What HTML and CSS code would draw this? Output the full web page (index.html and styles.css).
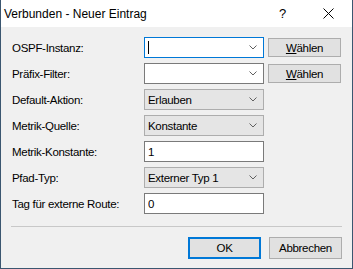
FILE: index.html
```html
<!DOCTYPE html>
<html lang="de">
<head>
    <meta charset="UTF-8">
    <meta name="viewport" content="width=device-width, initial-scale=1.0">
    <title>Verbunden - Neuer Eintrag</title>
    <link rel="stylesheet" href="styles.css">
</head>
<body>
    <div class="window">
        <!-- Titelleiste -->
        <div class="titlebar">
            <span class="title">Verbunden - Neuer Eintrag</span>
            <span class="help">?</span>
            <span class="close">
                <svg width="11" height="11" viewBox="0 0 11 11"><path d="M0.5 0.5 L10.5 10.5 M10.5 0.5 L0.5 10.5" stroke="#000" stroke-width="1" fill="none"/></svg>
            </span>
        </div>

        <div class="content">
            <div class="form">
                <label>OSPF-Instanz:</label>
                <div class="combo edit focus"><span class="caret"></span><svg class="chev" width="8" height="5" viewBox="0 0 8 5"><path d="M0.5 0.5 L4 4 L7.5 0.5" stroke="#606060" fill="none"/></svg></div>
                <button class="btn small"><u>W</u>ählen</button>

                <label>Präfix-Filter:</label>
                <div class="combo edit"><span></span><svg class="chev" width="8" height="5" viewBox="0 0 8 5"><path d="M0.5 0.5 L4 4 L7.5 0.5" stroke="#606060" fill="none"/></svg></div>
                <button class="btn small"><u>W</u>ählen</button>

                <label>Default-Aktion:</label>
                <div class="combo list"><span>Erlauben</span><svg class="chev" width="8" height="5" viewBox="0 0 8 5"><path d="M0.5 0.5 L4 4 L7.5 0.5" stroke="#606060" fill="none"/></svg></div>
                <div></div>

                <label>Metrik-Quelle:</label>
                <div class="combo list"><span>Konstante</span><svg class="chev" width="8" height="5" viewBox="0 0 8 5"><path d="M0.5 0.5 L4 4 L7.5 0.5" stroke="#606060" fill="none"/></svg></div>
                <div></div>

                <label>Metrik-Konstante:</label>
                <input class="field" type="text" value="1">
                <div></div>

                <label>Pfad-Typ:</label>
                <div class="combo list"><span>Externer Typ 1</span><svg class="chev" width="8" height="5" viewBox="0 0 8 5"><path d="M0.5 0.5 L4 4 L7.5 0.5" stroke="#606060" fill="none"/></svg></div>
                <div></div>

                <label>Tag für externe Route:</label>
                <input class="field" type="text" value="0">
                <div></div>
            </div>

            <div class="separator"></div>

            <div class="actions">
                <button class="btn default">OK</button>
                <button class="btn">Abbrechen</button>
            </div>
        </div>
    </div>
</body>
</html>
```

FILE: styles.css
```css
body {
    margin: 0;
    font-family: "Liberation Sans", Arial, sans-serif;
    font-size: 11.5px;
    letter-spacing: -0.3px;
    color: #000;
    background-color: #f0f0f0;
}

.window {
    box-sizing: border-box;
    width: 353px;
    height: 269px;
    border: 1px solid #3b5670;
    border-top: none;
    background-color: #f0f0f0;
    display: flex;
    flex-direction: column;
}

.titlebar {
    height: 27px;
    background-color: #fff;
    display: flex;
    align-items: center;
    padding-left: 3px;
    font-size: 12px;
    letter-spacing: 0;
}

.title {
    flex: 1;
}

.help {
    width: 12px;
    margin-right: 32px;
    font-size: 13px;
}

.close {
    display: flex;
    margin-right: 18px;
}

.content {
    padding: 10px 10px 0 11px;
}

.form {
    display: grid;
    grid-template-columns: 128px 120px 73px;
    grid-auto-rows: 21px;
    column-gap: 4px;
    row-gap: 5px;
}

label {
    display: flex;
    align-items: center;
}

.combo, .field {
    box-sizing: border-box;
    height: 21px;
    border: 1px solid #7a7a7a;
    background-color: #fff;
    display: flex;
    align-items: center;
    padding: 0 6px 0 3px;
}

.combo span {
    flex: 1;
}

.combo.focus {
    border-color: #0078d7;
}

.combo.list {
    background-color: #e5e5e5;
    border-color: #adadad;
}

.caret {
    flex: none !important;
    width: 1px;
    height: 13px;
    background-color: #000;
}

.combo.focus .chev {
    margin-left: auto;
}

.field {
    width: 120px;
    font-family: inherit;
    font-size: inherit;
    letter-spacing: inherit;
    color: #000;
    outline: none;
    margin: 0;
}

.btn {
    box-sizing: border-box;
    width: 73px;
    height: 22px;
    font-family: inherit;
    font-size: inherit;
    letter-spacing: inherit;
    color: #000;
    background-color: #e1e1e1;
    border: 1px solid #adadad;
    padding: 0;
}

.btn.small {
    height: 19px;
    margin-top: 1px;
}

.btn.default {
    border: 2px solid #0078d7;
}

.separator {
    height: 1px;
    background-color: #c8c8c8;
    margin: 12px 0 0 -1px;
}

.actions {
    display: flex;
    justify-content: flex-end;
    gap: 8px;
    margin-top: 10px;
}
```
